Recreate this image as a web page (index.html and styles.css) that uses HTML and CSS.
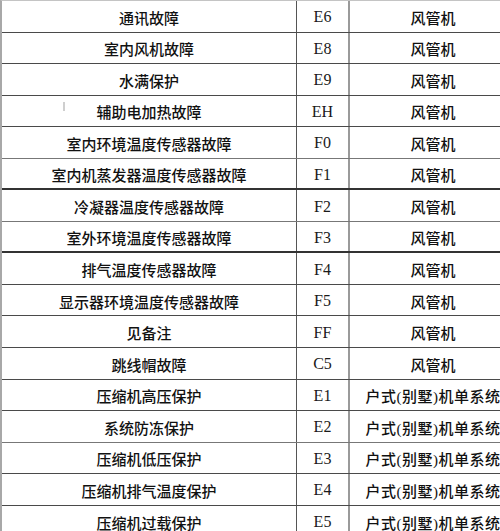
FILE: index.html
```html
<!DOCTYPE html>
<html lang="zh-CN">
<head>
<meta charset="utf-8">
<title>故障代码表</title>
<link rel="stylesheet" href="styles.css">
</head>
<body>
<div class="table">
  <div class="row"><div class="c1">通讯故障</div><div class="c2">E6</div><div class="c3">风管机</div></div>
  <div class="row"><div class="c1">室内风机故障</div><div class="c2">E8</div><div class="c3">风管机</div></div>
  <div class="row"><div class="c1">水满保护</div><div class="c2">E9</div><div class="c3">风管机</div></div>
  <div class="row"><div class="c1 marked">辅助电加热故障<span class="speck"></span></div><div class="c2">EH</div><div class="c3">风管机</div></div>
  <div class="row light"><div class="c1">室内环境温度传感器故障</div><div class="c2">F0</div><div class="c3">风管机</div></div>
  <div class="row thick"><div class="c1">室内机蒸发器温度传感器故障</div><div class="c2">F1</div><div class="c3">风管机</div></div>
  <div class="row light"><div class="c1">冷凝器温度传感器故障</div><div class="c2">F2</div><div class="c3">风管机</div></div>
  <div class="row thick"><div class="c1">室外环境温度传感器故障</div><div class="c2">F3</div><div class="c3">风管机</div></div>
  <div class="row"><div class="c1">排气温度传感器故障</div><div class="c2">F4</div><div class="c3">风管机</div></div>
  <div class="row"><div class="c1">显示器环境温度传感器故障</div><div class="c2">F5</div><div class="c3">风管机</div></div>
  <div class="row"><div class="c1">见备注</div><div class="c2">FF</div><div class="c3">风管机</div></div>
  <div class="row"><div class="c1">跳线帽故障</div><div class="c2">C5</div><div class="c3">风管机</div></div>
  <div class="row"><div class="c1">压缩机高压保护</div><div class="c2">E1</div><div class="c3 wide">户式(别墅)机单系统</div></div>
  <div class="row light"><div class="c1">系统防冻保护</div><div class="c2">E2</div><div class="c3 wide">户式(别墅)机单系统</div></div>
  <div class="row"><div class="c1">压缩机低压保护</div><div class="c2">E3</div><div class="c3 wide">户式(别墅)机单系统</div></div>
  <div class="row"><div class="c1">压缩机排气温度保护</div><div class="c2">E4</div><div class="c3 wide">户式(别墅)机单系统</div></div>
  <div class="row"><div class="c1">压缩机过载保护</div><div class="c2">E5</div><div class="c3 wide">户式(别墅)机单系统</div></div>
</div>
</body>
</html>
```

FILE: styles.css
```css
html, body {
  margin: 0;
  padding: 0;
  background: #ffffff;
  overflow: hidden;
}

body {
  width: 500px;
  height: 531px;
  font-family: "Liberation Serif", "Noto Sans CJK SC", serif;
  font-size: 15px;
  font-weight: 500;
  color: #111111;
}

.table {
  width: 516px;
  border-top: 1px solid #c4c4c4;
  border-left: 2px solid #a8a8a8;
}

.row {
  display: grid;
  grid-template-columns: 295px 53px 166px;
  height: 31.55px;
  box-sizing: border-box;
  border-bottom: 1.5px solid #4a4a4a;
}

.row.light {
  border-bottom: 1px solid #777777;
}

.row.thick {
  border-bottom: 2px solid #333333;
}

.c1, .c2, .c3 {
  display: flex;
  align-items: center;
  justify-content: center;
  padding-top: 2px;
  white-space: nowrap;
  box-sizing: border-box;
}

.c1 {
  border-right: 1px solid #555555;
}

.c2 {
  border-right: 2px solid #9a9a9a;
  font-family: "Liberation Serif", serif;
  font-size: 16px;
  font-weight: 400;
  color: #1a1a1a;
}

.c3.wide {
  letter-spacing: 0.5px;
}

.marked {
  position: relative;
}

.speck {
  position: absolute;
  left: 61px;
  top: 6px;
  width: 1.5px;
  height: 9px;
  background: #cfcfcf;
}
```
